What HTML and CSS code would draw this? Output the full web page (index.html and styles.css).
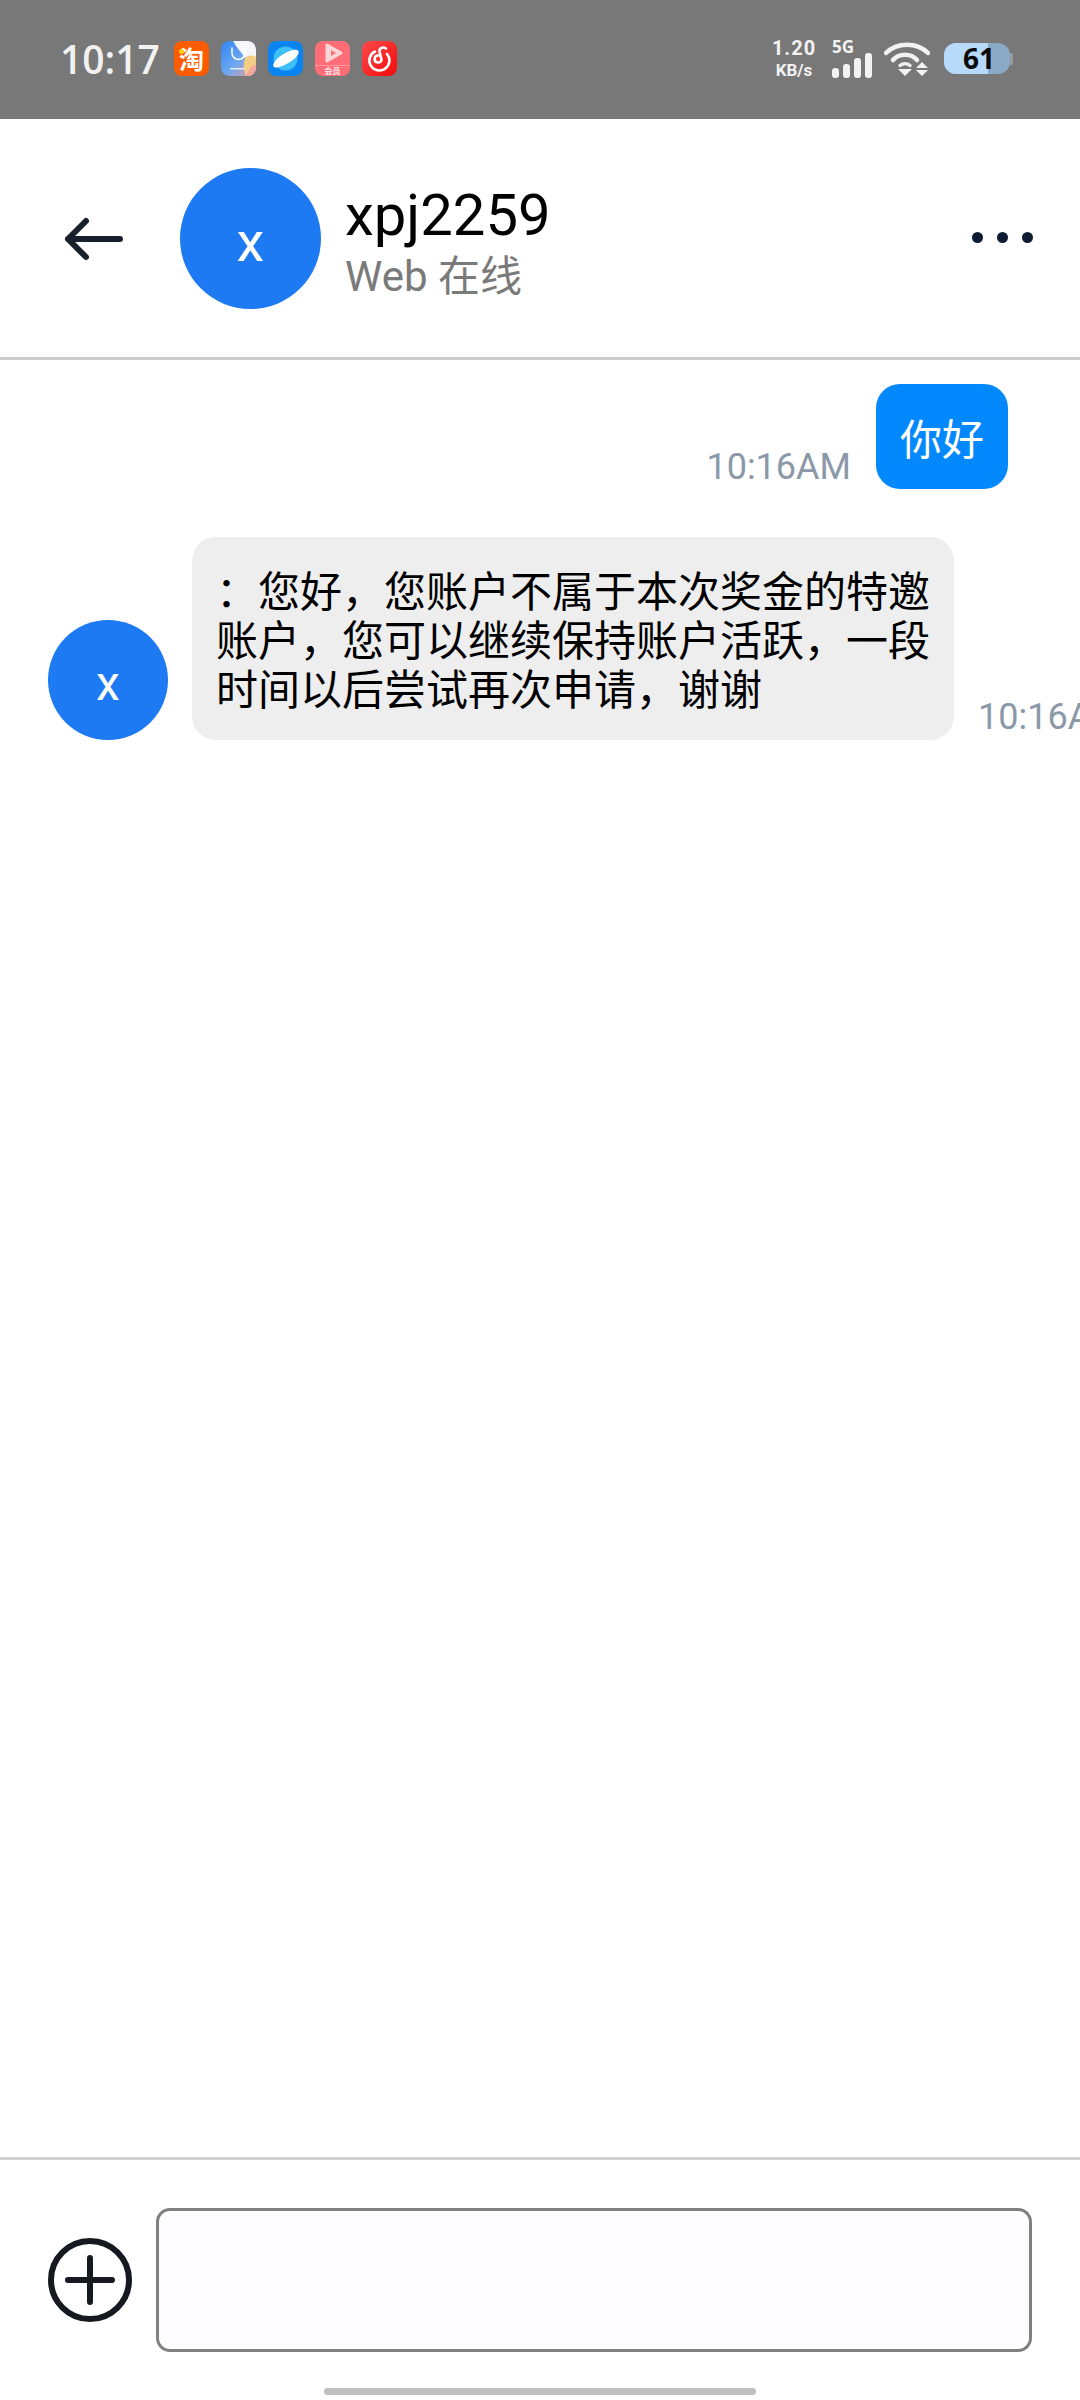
FILE: index.html
```html
<!DOCTYPE html>
<html lang="zh-CN">
<head>
  <meta charset="UTF-8">
  <title>xpj2259</title>
  <link rel="stylesheet" href="styles.css">
</head>
<body>
  <div class="page">
    <div class="statusbar">
      <span class="clock">10:17</span>
      <div class="apps">
        <div class="app app-taobao"><span class="taobao-dot"></span>淘</div>
        <svg class="app" viewBox="0 0 35 35">
          <defs>
            <linearGradient id="shopBg" x1="0" y1="0" x2="1" y2="1">
              <stop offset="0" stop-color="#2f86f6"/>
              <stop offset="0.55" stop-color="#6fa8ef"/>
              <stop offset="1" stop-color="#f29a9a"/>
            </linearGradient>
          </defs>
          <rect width="35" height="35" rx="8" fill="url(#shopBg)"/>
          <path d="M12 0 H27 a8 8 0 0 1 8 8 V17 C31 15 27 15 24 17 C21 12 15 6 12 0 Z" fill="#f4f6fa"/>
          <path d="M35 16 V27 a8 8 0 0 1 -8 8 H25 C22 28 22 20 25 16 C29 14 32 14 35 16 Z" fill="#f4cd84"/>
          <path d="M27 35 a8 8 0 0 0 8 -8 V24 C31 24 27 28 25 35 Z" fill="#f3a7a0"/>
          <path d="M11 7 V12 a6.500 6.500 0 0 0 13 0 V7" fill="none" stroke="#fff" stroke-width="1.500" stroke-linecap="round"/>
          <rect x="9" y="27" width="15" height="1.500" fill="#e4ecfb"/>
        </svg>
        <svg class="app" viewBox="0 0 35 35">
          <rect width="35" height="35" rx="8" fill="#0a84f0"/>
          <circle cx="17.500" cy="17.500" r="12" fill="#3cc0f5"/>
          <path d="M29 9 C32 10 31 14 26 18 C19 24 9 28 6 26 C3 24 8 18 14 14 C20 10 26 8 29 9 Z" fill="#fff"/>
        </svg>
        <div class="app app-video">
          <svg class="video-play" viewBox="0 0 24 24">
            <path d="M6 4 L20 12 L6 20 Z" fill="#fbd5d8" stroke="#fbd5d8" stroke-width="3" stroke-linejoin="round"/>
            <path d="M10 9 L15 12 L10 15 Z" fill="#ff7079"/>
          </svg>
          <span class="video-label">会员</span>
        </div>
        <svg class="app" viewBox="0 0 35 35">
          <defs>
            <linearGradient id="musicBg" x1="0" y1="0" x2="1" y2="1">
              <stop offset="0" stop-color="#fb4a4a"/>
              <stop offset="1" stop-color="#f40a0a"/>
            </linearGradient>
          </defs>
          <rect width="35" height="35" rx="8" fill="url(#musicBg)"/>
          <path d="M13 10.500 A10 10 0 1 0 25 13 M24 7.500 C21 5.500 17 7 17.500 10.500 L19.500 19 A3.500 3.500 0 1 1 16 14.500" fill="none" stroke="#fff" stroke-width="2.600" stroke-linecap="round"/>
        </svg>
      </div>
      <div class="indicators">
        <div class="netspeed"><span>1.20</span><span>KB/s</span></div>
        <div class="signal">
          <span class="signal-label">5G</span>
          <div class="signal-bars">
            <i class="bar1"></i><i class="bar2"></i><i class="bar3"></i><i class="bar4"></i>
          </div>
        </div>
        <svg class="wifi" viewBox="0 0 46 36">
          <path d="M2 12 C13 1 33 1 44 12" fill="none" stroke="#f2f2f2" stroke-width="4.500" stroke-linecap="round"/>
          <path d="M9 19 C15 12 27 12 33 19" fill="none" stroke="#f2f2f2" stroke-width="4.500" stroke-linecap="round"/>
          <path d="M16 24.500 C19 22 23 22 26 24.500" fill="none" stroke="#f2f2f2" stroke-width="3.500" stroke-linecap="round"/>
          <path d="M14 28 H28 L21 35 Z" fill="#f2f2f2"/>
          <path d="M38 21 L44 27 H32 Z M32 29 H44 L38 35 Z" fill="#f2f2f2"/>
        </svg>
        <div class="battery">
          <div class="battery-body">
            <div class="battery-fill"></div>
            <span class="battery-level">61</span>
          </div>
          <span class="battery-nub"></span>
        </div>
      </div>
    </div>

    <div class="header">
      <svg class="back" viewBox="0 0 60 44">
        <path d="M57 22 H5 M23 4 L5 22 L23 40" fill="none" stroke="#18202c" stroke-width="6" stroke-linecap="round" stroke-linejoin="round"/>
      </svg>
      <div class="avatar avatar-large">x</div>
      <div class="title">
        <div class="name">xpj2259</div>
        <div class="online">Web 在线</div>
      </div>
      <div class="more"><i></i><i></i><i></i></div>
    </div>

    <div class="messages">
      <div class="msg msg-mine">
        <span class="time">10:16AM</span>
        <div class="bubble bubble-mine">你好</div>
      </div>
      <div class="msg msg-other">
        <div class="avatar avatar-small">x</div>
        <div class="bubble bubble-other">：您好，您账户不属于本次奖金的特邀账户，您可以继续保持账户活跃，一段时间以后尝试再次申请，谢谢</div>
        <span class="time">10:16AM</span>
      </div>
    </div>

    <div class="composer">
      <svg class="plus" viewBox="0 0 84 84">
        <circle cx="42" cy="42" r="39" fill="none" stroke="#16191f" stroke-width="6"/>
        <path d="M42 20 V64 M20 42 H64" fill="none" stroke="#16191f" stroke-width="6" stroke-linecap="round"/>
      </svg>
      <div class="input"></div>
    </div>
    <div class="navbar"><span class="nav-pill"></span></div>
  </div>
</body>
</html>
```

FILE: styles.css
```css
* {
  box-sizing: border-box;
}
body {
  margin: 0;
  background: #fff;
  font-family: "Roboto", "Noto Sans CJK SC", sans-serif;
}
.page {
  width: 1080px;
  height: 2400px;
  display: flex;
  flex-direction: column;
  overflow: hidden;
}

/* status bar */
.statusbar {
  height: 119px;
  flex-shrink: 0;
  background: #787878;
  display: flex;
  align-items: center;
  padding: 0 67px 2px 60px;
  color: #f2f2f2;
}
.clock {
  font-family: "Open Sans", sans-serif;
  font-size: 39px;
  font-weight: 600;
  width: 115px;
}
.apps {
  display: flex;
  gap: 12px;
  margin-left: -1px;
}
.app {
  display: block;
  width: 35px;
  height: 35px;
  border-radius: 8px;
  position: relative;
  overflow: hidden;
}
.app-taobao {
  background: #ff5c00;
  color: #fff;
  font: 700 25px/35px "Noto Sans CJK SC", sans-serif;
  text-align: center;
}
.taobao-dot {
  position: absolute;
  left: 5px;
  top: 8px;
  width: 5px;
  height: 5px;
  border-radius: 50%;
  background: #ffd21a;
}
.app-video {
  background: #ff6d76;
  display: flex;
  flex-direction: column;
  align-items: center;
}
.video-play {
  width: 24px;
  height: 24px;
  flex-shrink: 0;
}
.video-label {
  width: 100%;
  height: 11px;
  border-top: 1px solid #ff98a0;
  color: #ffe9ea;
  font: 700 8px/10px "Noto Sans CJK SC", sans-serif;
  text-align: center;
}
.indicators {
  margin-left: auto;
  display: flex;
  align-items: center;
}
.netspeed {
  display: flex;
  flex-direction: column;
  align-items: center;
  width: 46px;
  font-weight: 700;
  line-height: 22px;
}
.netspeed span:first-child {
  font-size: 20px;
  letter-spacing: 1px;
}
.netspeed span:last-child {
  font-size: 17px;
}
.signal {
  margin-left: 15px;
  width: 42px;
  display: flex;
  flex-direction: column;
}
.signal-label {
  font-family: "Open Sans", sans-serif;
  font-size: 17px;
  font-weight: 700;
  line-height: 14px;
}
.signal-bars {
  display: flex;
  align-items: flex-end;
  gap: 4px;
  height: 25px;
  margin-top: -1px;
}
.signal-bars i {
  width: 7px;
  border-radius: 3px;
  background: #f2f2f2;
}
.bar1 { height: 10px; }
.bar2 { height: 14px; }
.bar3 { height: 20px; }
.bar4 { height: 25px; }
.wifi {
  width: 46px;
  height: 36px;
  margin-left: 10px;
}
.battery {
  margin-left: 14px;
  display: flex;
  align-items: center;
}
.battery-body {
  position: relative;
  width: 66px;
  height: 31px;
  border-radius: 12px;
  background: #8aa9c6;
  display: flex;
  align-items: center;
  justify-content: center;
}
.battery-fill {
  position: absolute;
  left: 0;
  top: 0;
  bottom: 0;
  width: 44px;
  border-radius: 12px 0 0 12px;
  background: #b7d9fa;
}
.battery-level {
  position: relative;
  color: #0a0a0a;
  font-family: "Open Sans", sans-serif;
  font-size: 28px;
  font-weight: 700;
  line-height: 31px;
  padding-left: 4px;
}
.battery-nub {
  width: 3px;
  height: 12px;
  border-radius: 0 2px 2px 0;
  background: #9a9a9a;
}

/* header */
.header {
  height: 241px;
  flex-shrink: 0;
  display: flex;
  align-items: center;
  padding-left: 63px;
  border-bottom: 3px solid #cccccc;
}
.back {
  width: 60px;
  height: 44px;
  margin-right: 57px;
  margin-top: 1px;
}
.avatar {
  flex-shrink: 0;
  border-radius: 50%;
  background: #1d7af3;
  color: #fff;
  display: flex;
  align-items: center;
  justify-content: center;
}
.avatar-large {
  width: 141px;
  height: 141px;
  font-size: 56px;
  padding-top: 7px;
}
.title {
  margin-left: 24px;
  margin-top: 8px;
}
.name {
  color: #000;
  font-size: 58px;
  line-height: 64px;
}
.online {
  color: #7a7a7a;
  font-size: 42px;
  line-height: 48px;
  margin-top: 6px;
}
.more {
  margin-left: auto;
  margin-right: 47px;
  display: flex;
  gap: 14px;
  margin-top: -2px;
}
.more i {
  width: 11px;
  height: 11px;
  border-radius: 50%;
  background: #0e1c33;
}

/* messages */
.messages {
  flex: 1;
  display: flex;
  flex-direction: column;
  gap: 48px;
  padding-top: 24px;
}
.msg {
  display: flex;
  align-items: flex-end;
  flex-shrink: 0;
}
.msg-mine {
  justify-content: flex-end;
  padding-right: 72px;
}
.msg-other {
  padding-left: 48px;
}
.time {
  color: #8b98a8;
  font-size: 36px;
  line-height: 44px;
  white-space: nowrap;
  flex-shrink: 0;
}
.msg-mine .time {
  margin-right: 25px;
}
.msg-other .time {
  margin-left: 24px;
  padding-bottom: 1px;
}
.bubble {
  border-radius: 24px;
  font-size: 42px;
  flex-shrink: 0;
}
.bubble-mine {
  width: 132px;
  height: 105px;
  background: #0488fe;
  color: #fff;
  display: flex;
  align-items: center;
  justify-content: center;
}
.avatar-small {
  width: 120px;
  height: 120px;
  font-size: 48px;
  padding-top: 6px;
}
.bubble-other {
  width: 762px;
  margin-left: 24px;
  padding: 31px 24px 25px;
  background: #eeeeee;
  color: #000;
  line-height: 49px;
}

/* composer */
.composer {
  height: 241px;
  flex-shrink: 0;
  border-top: 3px solid #d2d2d2;
  display: flex;
  align-items: center;
  padding: 2px 48px 0;
}
.plus {
  width: 84px;
  height: 84px;
  flex-shrink: 0;
}
.input {
  flex: 1;
  height: 144px;
  margin-left: 24px;
  background: #fdfdff;
  border: 3px solid #808080;
  border-radius: 14px;
}
.navbar {
  height: 2px;
  flex-shrink: 0;
  display: flex;
  justify-content: center;
  position: relative;
}
.nav-pill {
  position: absolute;
  top: -10px;
  width: 432px;
  height: 7px;
  border-radius: 4px;
  background: #bfbfbf;
}
```
